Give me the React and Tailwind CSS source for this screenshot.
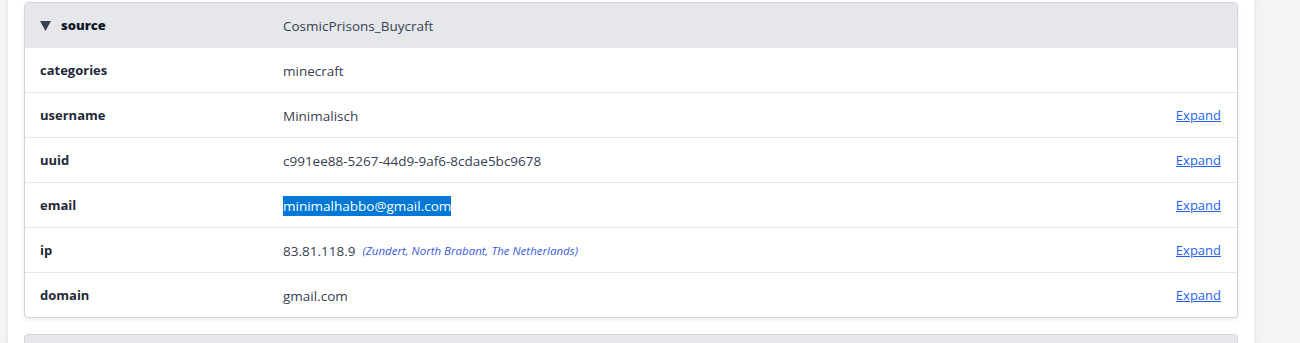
const rows = [
  { key: 'categories', value: 'minecraft', expand: false },
  { key: 'username', value: 'Minimalisch', expand: true },
  { key: 'uuid', value: 'c991ee88-5267-44d9-9af6-8cdae5bc9678', expand: true },
  { key: 'email', value: 'minimalhabbo@gmail.com', expand: true, selected: true },
  { key: 'ip', value: '83.81.118.9', location: '(Zundert, North Brabant, The Netherlands)', expand: true },
  { key: 'domain', value: 'gmail.com', expand: true },
];

export default function App() {
  return (
    <div className="flex h-[343px] overflow-hidden bg-white text-[13px] text-[#374151] font-['Open_Sans',sans-serif]">
      {/* Left gutter */}
      <div className="w-2 bg-[#f3f4f6] shadow-[inset_-3px_0_4px_-2px_rgba(0,0,0,0.06)]" />

      {/* Main */}
      <div className="flex-1 px-4 pt-[2px]">
        <div className="border border-[#d1d5db] rounded-sm shadow-[0_2px_4px_rgba(0,0,0,0.08)] bg-white">
          <div className="flex items-center h-[44px] pt-[2px] pl-[15px] pr-4 bg-[#e5e7eb]">
            <div className="w-[243px] flex items-center">
              <svg width="11" height="10" viewBox="0 0 11 10" className="mr-[10px]">
                <path d="M0 0 H11 L5.5 10 Z" fill="#374151" />
              </svg>
              <span className="font-extrabold text-[#111827]">source</span>
            </div>
            <span className="text-[13.5px]">CosmicPrisons_Buycraft</span>
          </div>
          {rows.map((row) => (
            <div key={row.key} className="flex items-center h-[45px] pt-[2px] pl-[15px] pr-4 border-t border-[#e5e7eb]">
              <div className="w-[243px] font-bold text-[#1f2937]">{row.key}</div>
              <div className="flex-1 flex items-center text-[13.5px]">
                {row.selected ? (
                  <span className="bg-[#0078d7] text-white">{row.value}</span>
                ) : (
                  <span>{row.value}</span>
                )}
                {row.location && (
                  <span className="ml-[7px] text-[11.5px] italic text-[#3b5bdb]">{row.location}</span>
                )}
              </div>
              {row.expand && (
                <a href="#" className="text-[#2563eb] underline">Expand</a>
              )}
            </div>
          ))}
        </div>

        <div className="mt-[16px] h-[45px] border border-[#d1d5db] rounded-sm bg-[#e5e7eb]" />
      </div>

      {/* Right gutter */}
      <div className="w-[46px] bg-[#f3f4f6] shadow-[inset_3px_0_4px_-2px_rgba(0,0,0,0.06)]" />
    </div>
  );
}
